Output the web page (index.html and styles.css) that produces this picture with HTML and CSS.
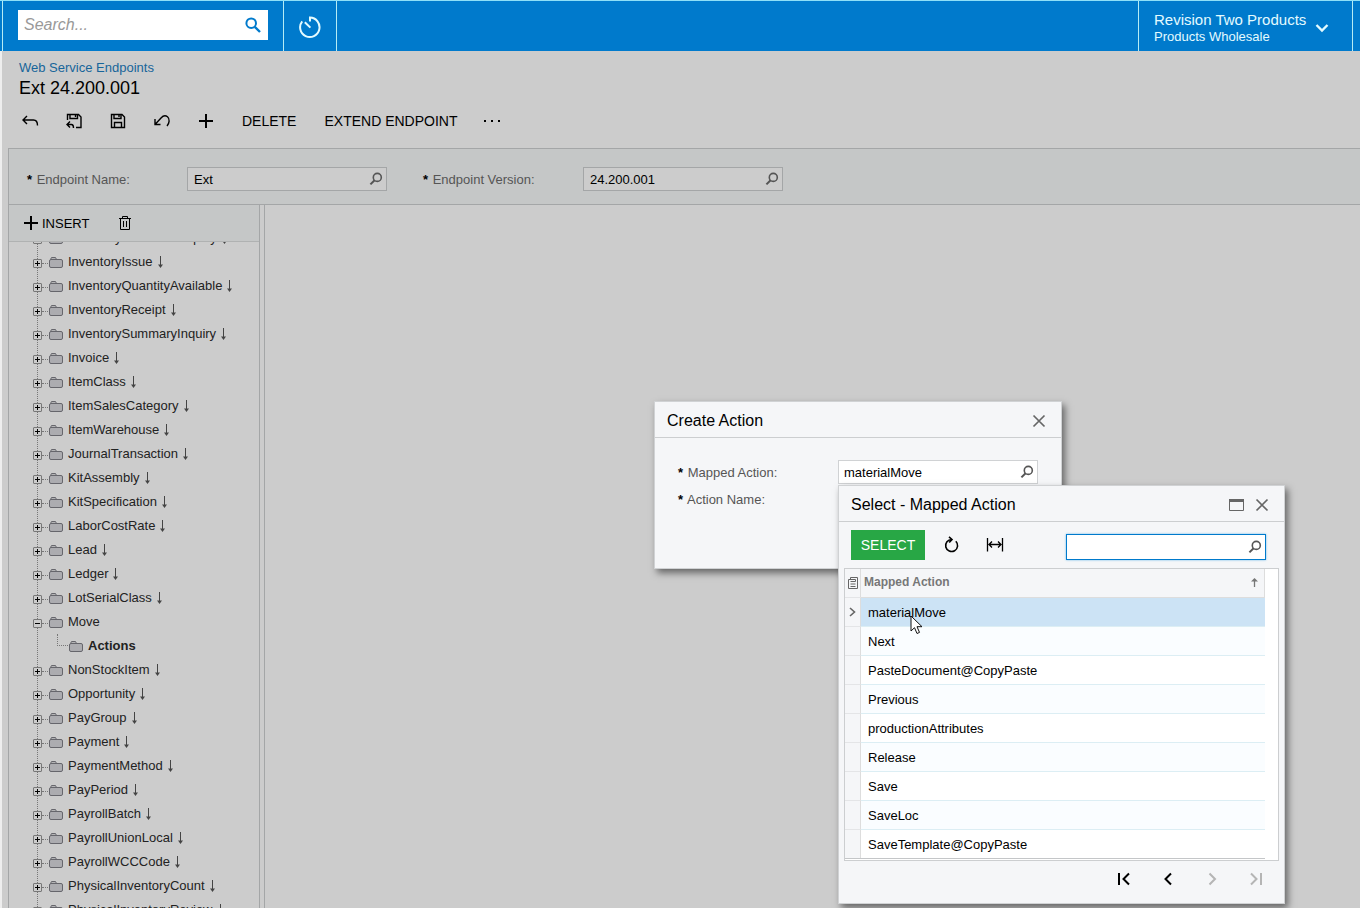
FILE: index.html
```html
<!DOCTYPE html>
<html lang="en">
<head>
  <meta charset="UTF-8">
  <title>Web Service Endpoints</title>
  <link rel="stylesheet" href="styles.css">
</head>
<body>
  <svg class="sprite" aria-hidden="true">
    <symbol id="i-lookup" viewBox="0 0 14 14"><circle cx="8.3" cy="5.4" r="4" fill="none" stroke="currentColor" stroke-width="1.6"/><path d="M5.6 8.3 1.4 12.4" fill="none" stroke="currentColor" stroke-width="2"/></symbol>
    <symbol id="i-close" viewBox="0 0 14 14"><path d="M1.5 1.5 12.5 12.5M12.5 1.5 1.5 12.5" fill="none" stroke="currentColor" stroke-width="1.7"/></symbol>
    <symbol id="i-folder" viewBox="0 0 14 12"><path d="M1.5 3.5 2.5 1.5H6.5L7.5 3.5" fill="#b4b4b6" stroke="#66666c"/><rect x=".5" y="3.5" width="13" height="8" rx="1.5" fill="#acacb0" stroke="#66666c"/></symbol>
    <symbol id="i-inherited" viewBox="0 0 5 12"><path d="M2.5 0V11" stroke="#444"/><path d="M0 8.500H5L2.500 12Z" fill="#444"/></symbol>
  </svg>

  <header class="top-bar">
    <form class="search-box">
      <input type="text" id="search" placeholder="Search..." aria-label="Search">
      <svg width="18" height="18" viewBox="0 0 18 18"><circle cx="7.2" cy="6.2" r="4.8" fill="none" stroke="currentColor" stroke-width="2"/><path d="M10.8 9.8 16 15" stroke="currentColor" stroke-width="2.4"/></svg>
    </form>
    <button class="history-button" aria-label="Recent">
      <svg width="24" height="26" viewBox="0 0 24 26" fill="none" stroke="currentColor" stroke-width="2"><path d="M4.200 8.300A9.700 9.700 0 1 0 12 4.600V8.500M6.800 9.200 12.400 14.600"/></svg>
    </button>
    <button class="company-menu">
      <span class="company-text"><span class="company-name">Revision Two Products</span><span class="branch-name">Products Wholesale</span></span>
      <svg width="14" height="14" viewBox="0 0 14 14"><path d="M1.5 5 7 10.500 12.5 5" fill="none" stroke="currentColor" stroke-width="2.4"/></svg>
    </button>
  </header>

  <main class="page">
    <a class="page-link" href="#">Web Service Endpoints</a>
    <h1>Ext 24.200.001</h1>

    <div class="toolbar">
      <button class="tool" aria-label="Back"><svg width="18" height="18" viewBox="0 0 18 18"><path d="M6 4 2 8 6 12M2 8H12.5Q16.500 8 16.500 13.500"/></svg></button>
      <button class="tool" aria-label="Save and close"><svg width="18" height="18" viewBox="0 0 18 18"><path d="M2.500 8V2.500H13.500L16 5V15.500H11M5 2.500V6.500H12.500V2.500M10.500 3V5M5 9.500 2 12.500 5 15.500M2 12.500H6.500Q8.500 12.500 8.500 16"/></svg></button>
      <button class="tool" aria-label="Save"><svg width="18" height="18" viewBox="0 0 18 18"><path d="M2.500 2.500H13L15.500 5V15.500H2.500ZM5 2.500V6.500H12V2.500M10 3V5M5.500 15.500V10.500H12.500V15.500"/></svg></button>
      <button class="tool" aria-label="Undo"><svg width="18" height="18" viewBox="0 0 18 18"><path d="M2 7V12.500H7.500M2 12.500 8 6C10 3.800 12.500 3.200 14.500 4.800C17 7 16.500 11 14 14"/></svg></button>
      <button class="tool" aria-label="Add"><svg width="18" height="18" viewBox="0 0 18 18"><path d="M2 9H16M9 2V16" stroke-width="2"/></svg></button>
      <button class="text-tool">DELETE</button>
      <button class="text-tool">EXTEND ENDPOINT</button>
      <button class="more-tool" aria-label="More"><svg width="18" height="4" viewBox="0 0 18 4"><path d="M1 1h2v2H1zM8 1h2v2H8zM15 1h2v2h-2z"/></svg></button>
    </div>

    <form class="endpoint-form">
      <label for="endpointName"><b>*</b> Endpoint Name:</label>
      <div class="lookup"><input type="text" id="endpointName" value="Ext"><svg><use href="#i-lookup"/></svg></div>
      <label for="endpointVersion"><b>*</b> Endpoint Version:</label>
      <div class="lookup"><input type="text" id="endpointVersion" value="24.200.001"><svg><use href="#i-lookup"/></svg></div>
    </form>

    <div class="panels">
      <section class="tree-panel">
        <div class="tree-toolbar">
          <button class="insert-button"><svg width="16" height="16" viewBox="0 0 16 16"><path d="M1 8H15M8 1V15" stroke-width="2"/></svg>INSERT</button>
          <button class="delete-button" aria-label="Delete"><svg width="14" height="16" viewBox="0 0 14 16"><path d="M1 3.500H13M4.500 3V1.500H9.500V3M2.500 4V14.500H11.500V4M5.500 6V12M8.500 6V12"/></svg></button>
        </div>
        <div class="tree-view"><ul class="tree" id="tree"></ul></div>
      </section>
      <section class="detail-panel"></section>
    </div>
  </main>

  <div class="dialog create-dialog" role="dialog" aria-labelledby="createTitle">
    <div class="dialog-header">
      <h2 id="createTitle">Create Action</h2>
      <button aria-label="Close"><svg width="14" height="14"><use href="#i-close"/></svg></button>
    </div>
    <form class="create-form">
      <label for="mappedAction"><b>*</b> Mapped Action:</label>
      <div class="lookup"><input type="text" id="mappedAction" value="materialMove"><svg><use href="#i-lookup"/></svg></div>
      <label for="actionName"><b>*</b> Action Name:</label>
      <div class="lookup"><input type="text" id="actionName"></div>
    </form>
  </div>

  <div class="dialog select-dialog" role="dialog" aria-labelledby="selectTitle">
    <div class="dialog-header">
      <h2 id="selectTitle">Select - Mapped Action</h2>
      <button aria-label="Maximize"><svg width="15" height="12" viewBox="0 0 15 12"><path d="M.5 1.500H14.500V11.500H.5Z" fill="none" stroke="currentColor"/><path d="M0 0H15V3H0Z" fill="currentColor"/></svg></button>
      <button aria-label="Close"><svg width="14" height="14"><use href="#i-close"/></svg></button>
    </div>
    <div class="select-toolbar">
      <button class="select-button">SELECT</button>
      <button class="tool" aria-label="Refresh"><svg width="18" height="18" viewBox="0 0 18 18"><path d="M13.800 5.200A6 6 0 1 1 9.800 3.500M7 .8 10 3.500 7.200 6.500" stroke-width="1.600"/></svg></button>
      <button class="tool" aria-label="Fit to screen"><svg width="18" height="18" viewBox="0 0 18 18"><path d="M1.500 2V15.500M16.500 2V15.500M3 8.500H15M6 5.500 3 8.500 6 11.500M12 5.500 15 8.500 12 11.500" stroke-width="1.300"/></svg></button>
      <div class="lookup grid-search"><input type="text" id="gridSearch" aria-label="Search actions"><svg><use href="#i-lookup"/></svg></div>
    </div>
    <div class="grid">
      <table>
        <thead>
          <tr>
            <th class="marker"><svg width="10" height="12" viewBox="0 0 10 12"><path d="M.5 2.500V11.500H9.500V.5H2.500V2.500M.5 2.500H7.500V4.500M2.500 4.500H7.500M2.500 7H7.500M2.500 9.500H7.500" fill="none" stroke="currentColor"/></svg></th>
            <th class="sorted"><div>Mapped Action <svg width="7" height="9" viewBox="0 0 7 9"><path d="M3.500 9V1" stroke="currentColor" stroke-width="1.300"/><path d="M0 3.500 3.500 0 7 3.500Z" fill="currentColor"/></svg></div></th>
          </tr>
        </thead>
        <tbody>
          <tr class="selected"><td class="marker"><svg width="7" height="10" viewBox="0 0 7 10"><path d="M1 1 5.500 5 1 9" fill="none" stroke="currentColor" stroke-width="1.600"/></svg></td><td>materialMove</td></tr>
          <tr><td class="marker"></td><td>Next</td></tr>
          <tr><td class="marker"></td><td>PasteDocument@CopyPaste</td></tr>
          <tr><td class="marker"></td><td>Previous</td></tr>
          <tr><td class="marker"></td><td>productionAttributes</td></tr>
          <tr><td class="marker"></td><td>Release</td></tr>
          <tr><td class="marker"></td><td>Save</td></tr>
          <tr><td class="marker"></td><td>SaveLoc</td></tr>
          <tr><td class="marker"></td><td>SaveTemplate@CopyPaste</td></tr>
        </tbody>
      </table>
    </div>
    <div class="pager">
      <button aria-label="First page"><svg width="14" height="14" viewBox="0 0 14 14"><path d="M2 1V13M12 1.500 6.500 7 12 12.500"/></svg></button>
      <button aria-label="Previous page"><svg width="14" height="14" viewBox="0 0 14 14"><path d="M10 1.500 4.500 7 10 12.500"/></svg></button>
      <button aria-label="Next page" disabled><svg width="14" height="14" viewBox="0 0 14 14"><path d="M4.500 1.500 10 7 4.500 12.500"/></svg></button>
      <button aria-label="Last page" disabled><svg width="14" height="14" viewBox="0 0 14 14"><path d="M2 1.500 7.500 7 2 12.500M12 1V13"/></svg></button>
    </div>
    <svg class="pointer" width="13" height="20" viewBox="0 0 13 20"><path d="M1 1V16L4.500 12.700 7 18.500 9.500 17.400 7 11.700H12Z" fill="#fff" stroke="#111"/></svg>
  </div>

  <script>
    const entities = [
      'InventoryAllocationInquiry', 'InventoryIssue', 'InventoryQuantityAvailable',
      'InventoryReceipt', 'InventorySummaryInquiry', 'Invoice', 'ItemClass',
      'ItemSalesCategory', 'ItemWarehouse', 'JournalTransaction', 'KitAssembly',
      'KitSpecification', 'LaborCostRate', 'Lead', 'Ledger', 'LotSerialClass',
      'Move', 'NonStockItem', 'Opportunity', 'PayGroup', 'Payment', 'PaymentMethod',
      'PayPeriod', 'PayrollBatch', 'PayrollUnionLocal', 'PayrollWCCCode',
      'PhysicalInventoryCount', 'PhysicalInventoryReview'
    ];
    const folder = '<svg class="folder" width="14" height="12"><use href="#i-folder"/></svg>';
    const inherited = '<svg class="inherited" width="5" height="12"><use href="#i-inherited"/></svg>';

    // Move is the only entity that is open, and the only one not inherited
    document.getElementById('tree').innerHTML = entities.map(name => {
      const open = name === 'Move';
      return `<li>
        <div class="node"><button class="expander${open ? ' open' : ''}" aria-label="Toggle ${name}"></button><i class="dots"></i>${folder}<span>${name}</span>${open ? '' : inherited}</div>
        ${open ? `<div class="node child"><i class="elbow"></i>${folder}<b>Actions</b></div>` : ''}
      </li>`;
    }).join('');
  </script>
</body>
</html>
```
FILE: styles.css
```css
* {
  box-sizing: border-box;
}

body {
  margin: 0;
  height: 100vh;
  display: flex;
  flex-direction: column;
  overflow: hidden;
  background: #ccc;
  color: #000;
  font-family: "Liberation Sans", Arial, sans-serif;
  font-size: 13px;
}

button {
  display: flex;
  align-items: center;
  justify-content: center;
  padding: 0;
  border: none;
  background: none;
  color: inherit;
  font: inherit;
  cursor: pointer;
}

input {
  font: inherit;
  color: inherit;
}

h1,
h2 {
  margin: 0;
  font-size: 16px;
  font-weight: normal;
}

.sprite {
  display: none;
}

/* Top bar */
.top-bar {
  display: flex;
  flex: none;
  height: 51px;
  border-top: 1px solid #8fe0f8;
  background: #007acc;
  color: #e4fbff;
}

.search-box {
  display: flex;
  align-items: center;
  width: 281px;
  margin-left: 2px;
  padding: 0 15px;
  border-left: 1px solid #b5ecf5;
  color: #007acc;
}

.search-box input {
  width: 100%;
  height: 30px;
  margin-bottom: 2px;
  padding: 0 30px 0 6px;
  border: none;
  background: #fff;
  font-size: 16px;
  font-style: italic;
}

.search-box input::placeholder {
  color: #999;
}

.search-box svg {
  flex: none;
  margin-left: -24px;
  margin-right: 6px;
}

.history-button {
  width: 54px;
  border: 1px solid #b5ecf5;
  border-width: 0 1px;
}

.company-menu {
  justify-content: flex-start;
  gap: 9px;
  width: 215px;
  margin-left: auto;
  margin-right: 7px;
  padding: 2px 0 0 15px;
  border: 1px solid #b5ecf5;
  border-width: 0 1px;
}

.company-text {
  text-align: left;
}

.company-text span {
  display: block;
}

.company-name {
  font-size: 15px;
  line-height: 18px;
}

.branch-name {
  font-size: 13px;
  line-height: 15px;
}

/* Screen */
.page {
  display: flex;
  flex: 1;
  flex-direction: column;
  min-height: 0;
  padding: 8px 0 0 6px;
  border-left: 2px solid #eee;
}

.page-link {
  align-self: flex-start;
  margin-left: 11px;
  color: #17659a;
  line-height: 17px;
  text-decoration: none;
}

.page h1 {
  margin-left: 11px;
  font-size: 18px;
  line-height: 24px;
}

.toolbar {
  display: flex;
  align-items: center;
  height: 48px;
  padding-bottom: 6px;
}

.tool {
  width: 44px;
  height: 30px;
}

.tool svg,
.tree-toolbar svg,
.pager svg {
  fill: none;
  stroke: currentColor;
}

.tool svg {
  stroke-width: 1.4;
}

.text-tool {
  margin-left: 14px;
  padding-right: 14px;
  font-size: 14px;
}

.more-tool {
  margin-left: 12px;
}

.endpoint-form {
  display: flex;
  align-items: center;
  flex: none;
  height: 57px;
  padding: 5px 0 0 18px;
  border: 1px solid #a4a6a7;
  border-right: none;
  background: #c5c7c7;
}

label {
  color: #555;
}

label b {
  margin-right: 1px;
  color: #000;
}

.endpoint-form label {
  width: 160px;
}

.endpoint-form .lookup {
  margin-right: 36px;
}

.lookup {
  display: flex;
  align-items: center;
  width: 200px;
  color: #555;
}

.lookup input {
  width: 100%;
  height: 24px;
  padding: 0 22px 0 6px;
  border: 1px solid #a4a6a7;
  background: #ccc;
  color: #000;
}

.lookup svg {
  flex: none;
  width: 14px;
  height: 14px;
  margin-left: -18px;
  margin-right: 4px;
}

.panels {
  display: flex;
  flex: 1;
  gap: 4px;
  min-height: 0;
  margin-top: -1px;
}

.tree-panel {
  display: flex;
  flex-direction: column;
  width: 252px;
  border: 1px solid #a4a6a7;
  border-bottom: none;
}

.detail-panel {
  flex: 1;
  border-top: 1px solid #a4a6a7;
  border-left: 1px solid #a4a6a7;
  background: #ccc;
}

.tree-toolbar {
  display: flex;
  align-items: center;
  flex: none;
  gap: 29px;
  height: 37px;
  padding-left: 14px;
  border-bottom: 1px solid #b0b2b2;
  background: #c5c7c7;
}

.insert-button {
  gap: 3px;
}

.tree-view {
  flex: 1;
  overflow: hidden;
}

/* list is scrolled part way down */
.tree {
  margin: -16px 0 0;
  padding: 0;
  list-style: none;
  color: #222;
}

.tree li {
  padding-left: 24px;
  background: repeating-linear-gradient(#777 0 1px, transparent 1px 2px) 28px 0 / 1px 100% no-repeat;
}

.node {
  display: flex;
  align-items: center;
  height: 24px;
}

.node span,
.node b {
  padding-bottom: 2px;
}

.expander {
  width: 9px;
  height: 9px;
  margin-top: 3px;
  border: 1px solid #777;
  border-radius: 1px;
  background:
    linear-gradient(#000, #000) center / 5px 1px no-repeat,
    linear-gradient(#000, #000) center / 1px 5px no-repeat,
    #ccc;
}

.expander.open {
  background: linear-gradient(#000, #000) center / 5px 1px no-repeat, #ccc;
}

.dots {
  width: 6px;
  margin-top: 2px;
  border-top: 1px dotted #777;
}

.folder {
  margin-left: 1px;
  margin-right: 5px;
}

.inherited {
  margin-left: 5px;
}

.child {
  padding-left: 24px;
}

.elbow {
  align-self: flex-start;
  width: 11px;
  height: 12px;
  border: 1px dotted #777;
  border-width: 0 0 1px 1px;
}

/* Dialogs */
.dialog {
  position: absolute;
  border: 1px solid #d0d2d4;
  background: #f5f6f8;
  box-shadow: 3px 4px 7px rgba(0, 0, 0, 0.5);
}

.create-dialog {
  top: 401px;
  left: 654px;
  width: 408px;
  height: 168px;
}

.select-dialog {
  top: 485px;
  left: 838px;
  width: 447px;
}

.dialog-header {
  display: flex;
  align-items: center;
  gap: 11px;
  height: 36px;
  padding: 2px 15px 0 12px;
  border-bottom: 1px solid #ccced0;
}

.dialog-header h2 {
  margin-right: auto;
}

.dialog-header button {
  color: #666;
}

.create-form {
  display: grid;
  grid-template-columns: 160px 200px;
  align-items: center;
  row-gap: 3px;
  padding: 22px 23px;
}

.dialog .lookup input {
  padding-left: 5px;
  border-color: #d0d2d4;
  background: #fff;
}

.select-toolbar {
  display: flex;
  align-items: center;
  height: 46px;
  padding: 0 18px 0 12px;
}

.select-button {
  width: 74px;
  height: 30px;
  margin-right: 4px;
  background: #28a745;
  color: #fff;
  font-size: 14px;
}

.grid-search {
  margin: 4px 0 0 auto;
}

.dialog .grid-search input {
  height: 26px;
  border-color: #007acc;
  box-shadow: 0 0 2px #6bb8ea;
}

.grid {
  margin: 0 5px;
  padding: 0 13px 1px 0;
  border: 1px solid #ccced0;
  background: #fff;
}

.grid table {
  width: 100%;
  border-collapse: separate;
  border-spacing: 0;
  border-bottom: 1px solid #c4c6c8;
  table-layout: fixed;
}

.grid th,
.grid td {
  height: 29px;
  padding: 0 7px;
  border-bottom: 1px solid #dceef4;
  text-align: left;
}

.grid th {
  padding: 0 3px 2px;
  border-right: 1px solid #ddd;
  border-bottom-color: #ddd;
  background: #f5f6f8;
  color: #777;
  font-size: 12px;
}

.grid tbody tr:nth-child(even) {
  background: #fafdff;
}

.grid tbody tr:last-child td {
  height: 28px;
  border-bottom: none;
}

.grid tbody .selected {
  background: #cce3f5;
}

.grid .marker {
  width: 16px;
  padding: 0;
  border-right: 1px solid #ddd;
  border-bottom-color: #e4e5e7;
  background: #f5f6f8;
  color: #666;
  text-align: center;
}

.marker svg {
  display: block;
  margin: 0 auto;
}

.sorted div {
  display: flex;
  align-items: center;
  justify-content: space-between;
  padding-right: 3px;
}

.pager {
  display: flex;
  justify-content: flex-end;
  height: 42px;
  padding: 0 6px 6px 0;
}

.pager button {
  width: 44px;
}

.pager svg {
  stroke-width: 2;
}

.pager button:disabled {
  color: #b5b5b5;
}

.pointer {
  position: absolute;
  top: 129px;
  left: 71px;
}
```
